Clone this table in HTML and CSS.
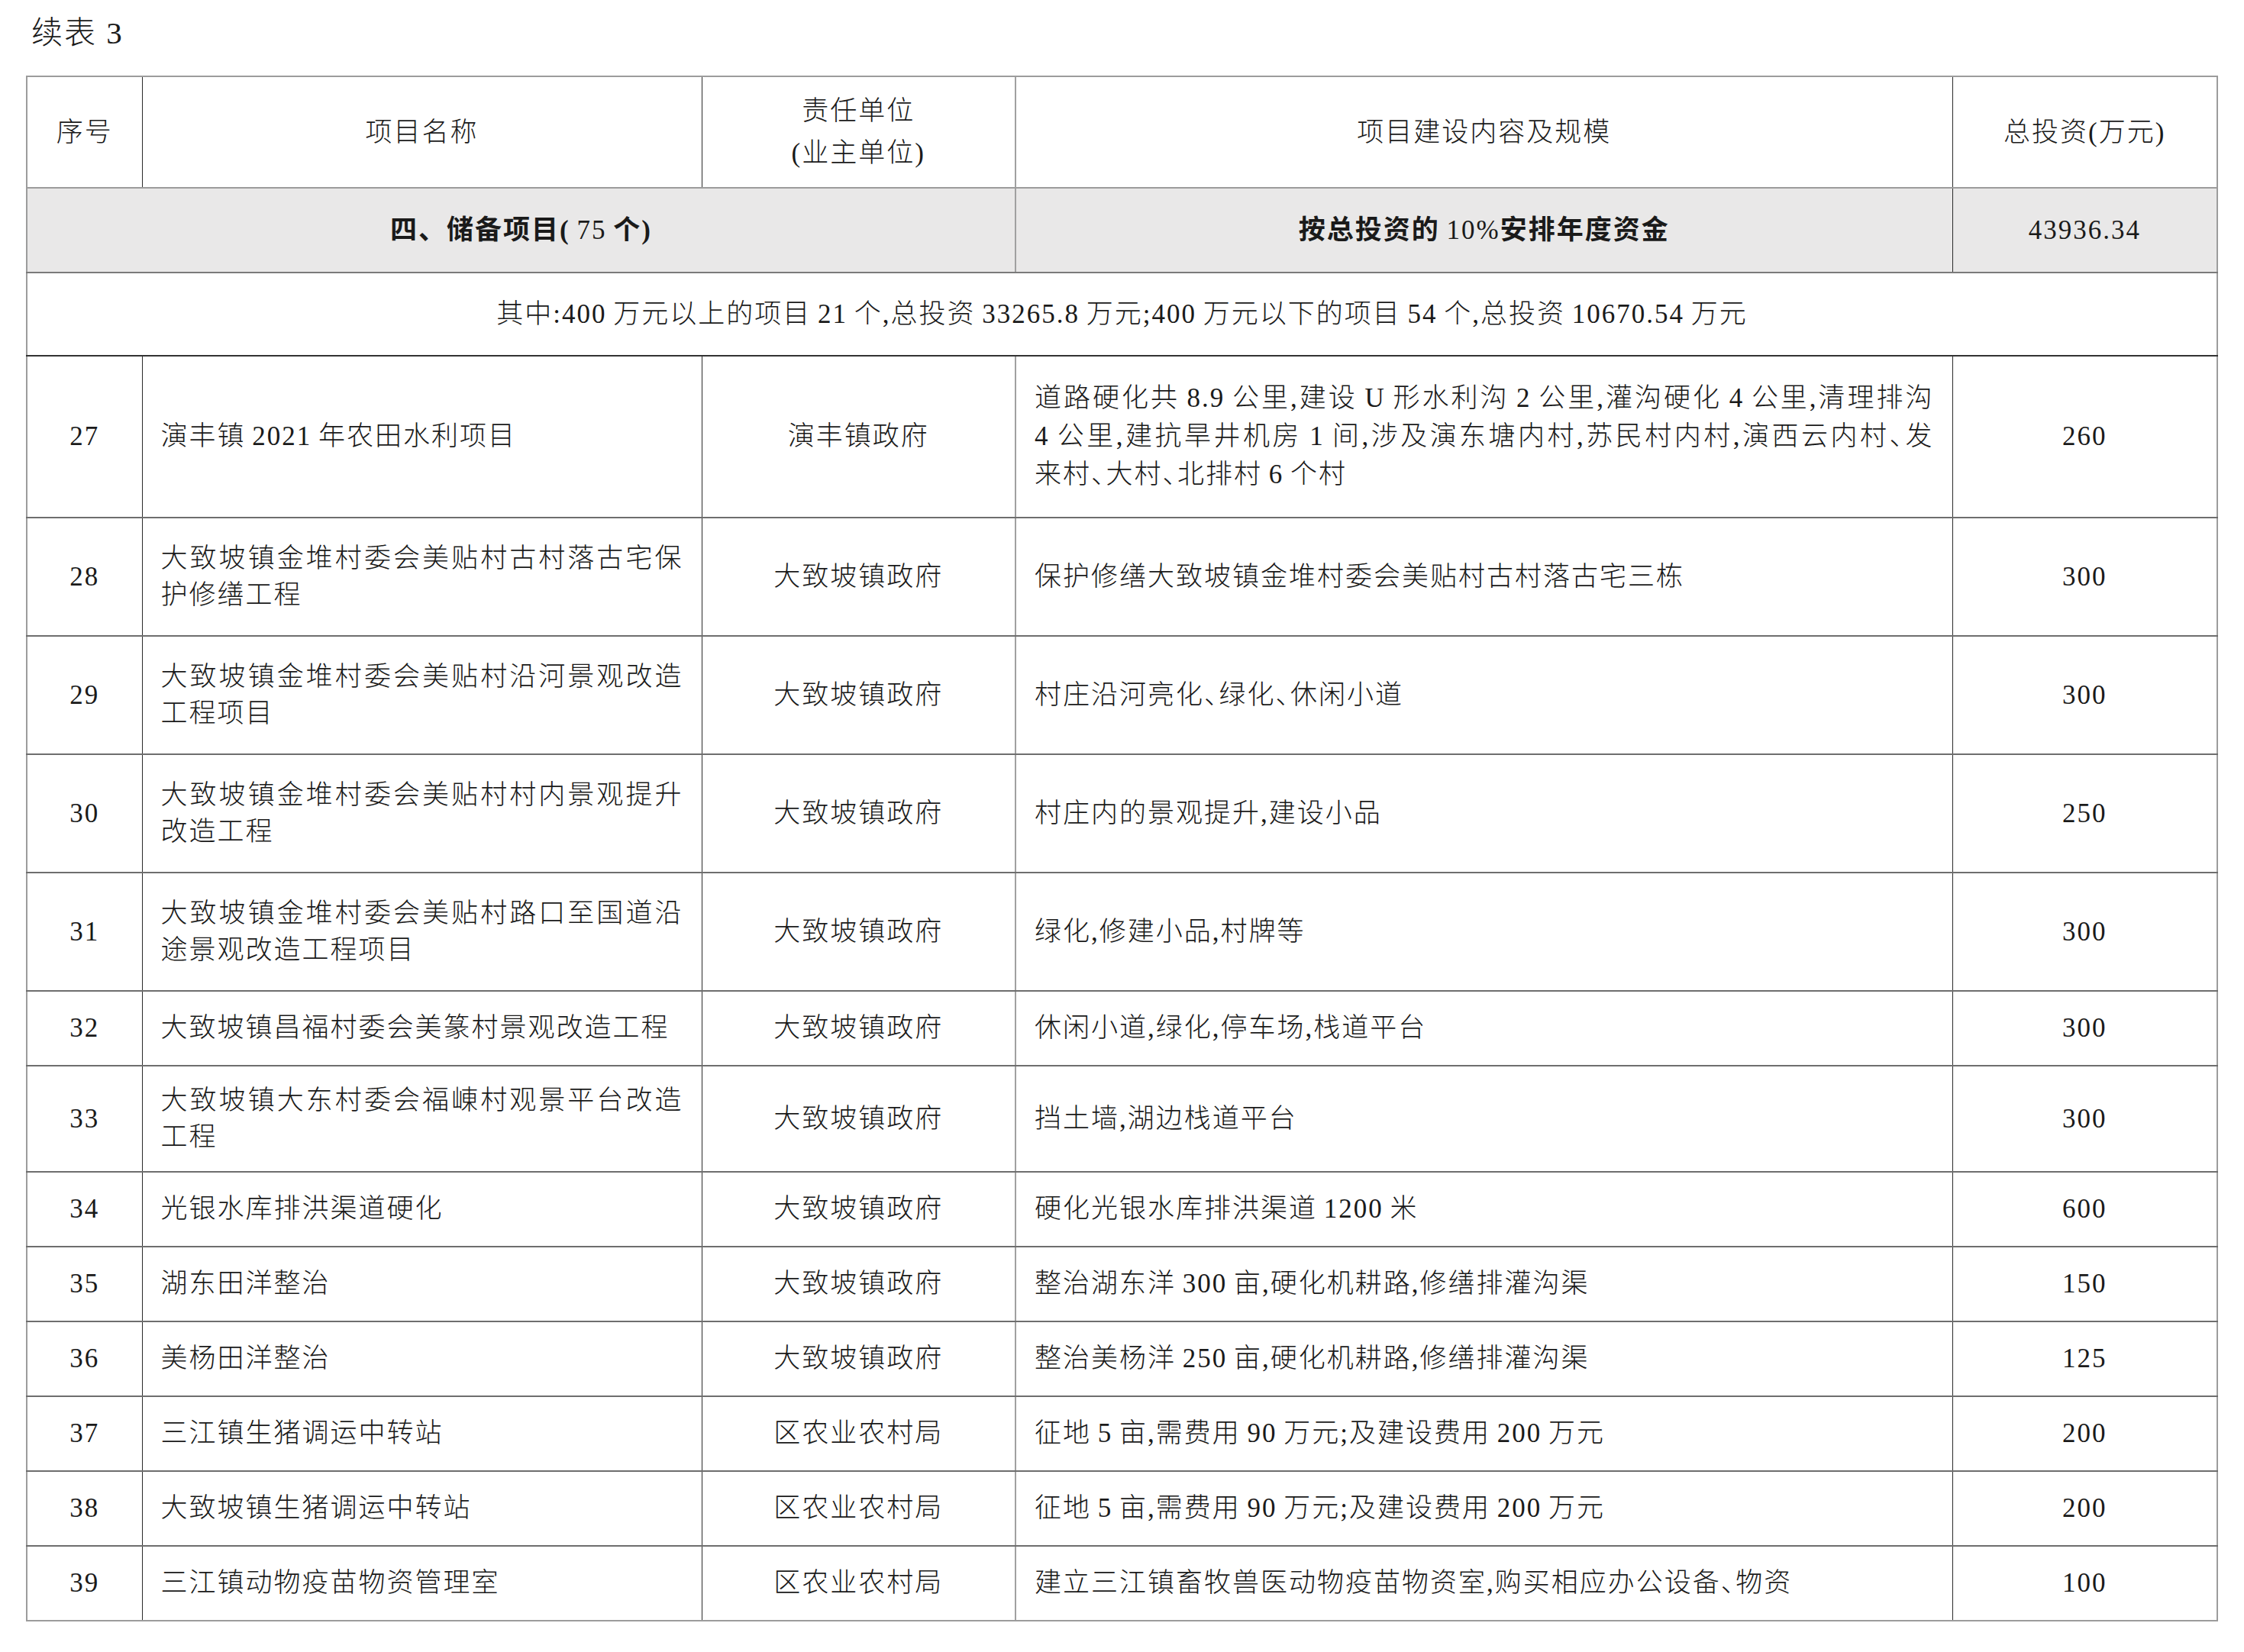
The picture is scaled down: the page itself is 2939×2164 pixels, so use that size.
FILE: index.html
```html
<!DOCTYPE html>
<html lang="zh-CN">
<head>
<meta charset="utf-8">
<title>续表 3</title>
<link rel="stylesheet" href="styles.css">
</head>
<body>
<div class="caption">续表 3</div>
<table class="tbl">
  <colgroup>
    <col class="w1"><col class="w2"><col class="w3"><col class="w4"><col class="w5">
  </colgroup>
  <thead>
    <tr class="hd">
      <th class="first">序号</th>
      <th>项目名称</th>
      <th>责任单位<br>(业主单位)</th>
      <th class="split">项目建设内容及规模</th>
      <th class="last">总投资(万元)</th>
    </tr>
  </thead>
  <tbody>
    <tr class="sum">
      <td colspan="3" class="first bold">四、储备项目( <span class="lat">75</span> 个)</td>
      <td class="split bold">按总投资的 <span class="lat">10%</span>安排年度资金</td>
      <td class="last amt">43936.34</td>
    </tr>
    <tr class="note">
      <td colspan="5" class="first last">其中:400 万元以上的项目 21 个,总投资 33265.8 万元;400 万元以下的项目 54 个,总投资 10670.54 万元</td>
    </tr>
    <tr class="h3">
      <td class="first no">27</td>
      <td class="name">演丰镇 2021 年农田水利项目</td>
      <td class="unit">演丰镇政府</td>
      <td class="split desc"><span class="ln">道路硬化共 8.9 公里,建设 U 形水利沟 2 公里,灌沟硬化 4 公里,清理排沟</span><span class="ln">4 公里,建抗旱井机房 1 间,涉及演东塘内村,苏民村内村,演西云内村、发</span><span class="ln end">来村、大村、北排村 6 个村</span></td>
      <td class="last amt">260</td>
    </tr>
    <tr class="h2">
      <td class="first no">28</td>
      <td class="name">大致坡镇金堆村委会美贴村古村落古宅保护修缮工程</td>
      <td class="unit">大致坡镇政府</td>
      <td class="split desc">保护修缮大致坡镇金堆村委会美贴村古村落古宅三栋</td>
      <td class="last amt">300</td>
    </tr>
    <tr class="h2">
      <td class="first no">29</td>
      <td class="name">大致坡镇金堆村委会美贴村沿河景观改造工程项目</td>
      <td class="unit">大致坡镇政府</td>
      <td class="split desc">村庄沿河亮化、绿化、休闲小道</td>
      <td class="last amt">300</td>
    </tr>
    <tr class="h2">
      <td class="first no">30</td>
      <td class="name">大致坡镇金堆村委会美贴村村内景观提升改造工程</td>
      <td class="unit">大致坡镇政府</td>
      <td class="split desc">村庄内的景观提升,建设小品</td>
      <td class="last amt">250</td>
    </tr>
    <tr class="h2">
      <td class="first no">31</td>
      <td class="name">大致坡镇金堆村委会美贴村路口至国道沿途景观改造工程项目</td>
      <td class="unit">大致坡镇政府</td>
      <td class="split desc">绿化,修建小品,村牌等</td>
      <td class="last amt">300</td>
    </tr>
    <tr class="h1">
      <td class="first no">32</td>
      <td class="name">大致坡镇昌福村委会美篆村景观改造工程</td>
      <td class="unit">大致坡镇政府</td>
      <td class="split desc">休闲小道,绿化,停车场,栈道平台</td>
      <td class="last amt">300</td>
    </tr>
    <tr class="h2s">
      <td class="first no">33</td>
      <td class="name">大致坡镇大东村委会福崠村观景平台改造工程</td>
      <td class="unit">大致坡镇政府</td>
      <td class="split desc">挡土墙,湖边栈道平台</td>
      <td class="last amt">300</td>
    </tr>
    <tr class="h1">
      <td class="first no">34</td>
      <td class="name">光银水库排洪渠道硬化</td>
      <td class="unit">大致坡镇政府</td>
      <td class="split desc">硬化光银水库排洪渠道 1200 米</td>
      <td class="last amt">600</td>
    </tr>
    <tr class="h1">
      <td class="first no">35</td>
      <td class="name">湖东田洋整治</td>
      <td class="unit">大致坡镇政府</td>
      <td class="split desc">整治湖东洋 300 亩,硬化机耕路,修缮排灌沟渠</td>
      <td class="last amt">150</td>
    </tr>
    <tr class="h1">
      <td class="first no">36</td>
      <td class="name">美杨田洋整治</td>
      <td class="unit">大致坡镇政府</td>
      <td class="split desc">整治美杨洋 250 亩,硬化机耕路,修缮排灌沟渠</td>
      <td class="last amt">125</td>
    </tr>
    <tr class="h1">
      <td class="first no">37</td>
      <td class="name">三江镇生猪调运中转站</td>
      <td class="unit">区农业农村局</td>
      <td class="split desc">征地 5 亩,需费用 90 万元;及建设费用 200 万元</td>
      <td class="last amt">200</td>
    </tr>
    <tr class="h1">
      <td class="first no">38</td>
      <td class="name">大致坡镇生猪调运中转站</td>
      <td class="unit">区农业农村局</td>
      <td class="split desc">征地 5 亩,需费用 90 万元;及建设费用 200 万元</td>
      <td class="last amt">200</td>
    </tr>
    <tr class="h1 bottom">
      <td class="first no">39</td>
      <td class="name">三江镇动物疫苗物资管理室</td>
      <td class="unit">区农业农村局</td>
      <td class="split desc">建立三江镇畜牧兽医动物疫苗物资室,购买相应办公设备、物资</td>
      <td class="last amt">100</td>
    </tr>
  </tbody>
</table>
</body>
</html>
```
FILE: styles.css
```css
html, body {
  margin: 0;
  padding: 0;
  background: #ffffff;
}

body {
  color: #1a1a1a;
  font-family: "Liberation Serif", "Noto Sans CJK SC", serif;
  font-weight: 300;
}

.caption {
  padding: 17px 0 0 41px;
  font-size: 41px;
  line-height: 52px;
  letter-spacing: 2px;
}

.tbl {
  margin: 30px 0 0 34px;
  width: 2869px;
  table-layout: fixed;
  border-collapse: collapse;
  font-size: 35px;
  line-height: 48px;
  letter-spacing: 2px;
  word-spacing: -2px;
  font-feature-settings: "halt" 1;
}

.w1 { width: 151px; }
.w2 { width: 733px; }
.w3 { width: 411px; }
.w4 { width: 1227px; }
.w5 { width: 347px; }

.tbl th,
.tbl td {
  padding: 0 24px;
  vertical-align: middle;
  border-top: 2px solid #6e6e6e;
  border-bottom: 2px solid #6e6e6e;
  border-left: 1px solid #2b2b2b;
  border-right: 1px solid #2b2b2b;
}

.tbl th {
  font-weight: 300;
  text-align: center;
  line-height: 55px;
  border-top-color: #9c9c9c;
  border-bottom-color: #9c9c9c;
}

.tbl .first { border-left: 2px solid #9c9c9c; }
.tbl .last { border-right: 2px solid #9c9c9c; }
.tbl .split { border-left: 2px solid #a0a0a0; }
.tbl .bottom td { border-bottom-color: #9c9c9c; }

.hd { height: 146px; }

.sum { height: 111px; background: #e9e8e8; }
.sum td { text-align: center; border-bottom-color: #7a7a7a; }
.sum .bold { font-weight: 700; font-feature-settings: normal; }
.sum .lat { font-weight: 400; }

.note { height: 109px; }
.note td { text-align: center; border-bottom-color: #333333; }

.h1 { height: 98px; }
.h2 { height: 155px; }
.h2s { height: 139px; }
.h3 { height: 212px; }

.no,
.unit,
.amt { text-align: center; }

.name {
  text-align: justify;
  padding-left: 26px;
  padding-right: 26px;
}

.desc { text-align: justify; }

.ln {
  display: block;
  white-space: nowrap;
  text-align-last: justify;
  line-height: 50px;
}

.ln.end { text-align-last: left; }
```
